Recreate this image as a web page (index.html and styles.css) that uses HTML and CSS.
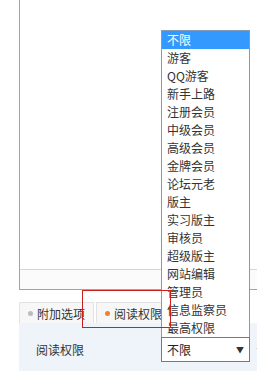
FILE: index.html
```html
<!DOCTYPE html>
<html lang="zh-CN">
<head>
    <meta charset="UTF-8">
    <title>阅读权限</title>
    <link rel="stylesheet" href="styles.css">
</head>
<body>
    <div class="page">
        <div class="editor">
            <div class="editor-foot"></div>
        </div>
        <div class="tabs">
            <div class="tab"><span class="dot"></span>附加选项</div>
            <div class="tab"><span class="dot dot-on"></span>阅读权限</div>
            <div class="tab"><span class="dot"></span>其他</div>
        </div>
        <div class="panel">
            <span class="label">阅读权限</span>
            <div class="select-wrap">
                <ul class="options">
                    <li class="selected">不限</li>
                    <li>游客</li>
                    <li>QQ游客</li>
                    <li>新手上路</li>
                    <li>注册会员</li>
                    <li>中级会员</li>
                    <li>高级会员</li>
                    <li>金牌会员</li>
                    <li>论坛元老</li>
                    <li>版主</li>
                    <li>实习版主</li>
                    <li>审核员</li>
                    <li>超级版主</li>
                    <li>网站编辑</li>
                    <li>管理员</li>
                    <li>信息监察员</li>
                    <li>最高权限</li>
                </ul>
                <div class="select">不限<span class="arrow">▼</span></div>
            </div>
            <span class="hint">请</span>
        </div>
        <div class="mark"></div>
    </div>
</body>
</html>
```
FILE: styles.css
```css
html, body {
    margin: 0;
    background: #fff;
}
body {
    width: 257px;
    height: 371px;
    overflow: hidden;
    font-family: "Noto Sans CJK SC", "Liberation Sans", sans-serif;
    font-size: 12px;
    color: #333;
}
.page {
    position: relative;
    padding-left: 19px;
}

/* 编辑器区域 */
.editor {
    box-sizing: border-box;
    width: 300px;
    height: 290px;
    border-left: 1px solid #a3a3a3;
    border-bottom: 1px solid #a3a3a3;
    display: flex;
    flex-direction: column;
    justify-content: flex-end;
}
.editor-foot {
    height: 19px;
    border-top: 1px solid #d6d6d6;
    background: #fbfbfb;
}

/* 选项卡 */
.tabs {
    display: flex;
    gap: 2px;
    margin-top: 12px;
    height: 21px;
    width: 300px;
}
.tab {
    display: flex;
    align-items: center;
    gap: 4px;
    padding: 0 8px 0 8px;
    border: 1px solid #e3e3e3;
    border-bottom: 0;
    background: #f7f7f7;
    white-space: nowrap;
}
.dot {
    width: 5px;
    height: 5px;
    border-radius: 50%;
    background: #bdbdbd;
}
.dot-on { background: #f08030; }

/* 设置面板 */
.panel {
    display: flex;
    align-items: center;
    width: 300px;
    height: 60px;
    box-sizing: border-box;
    padding: 14px 0 0 17px;
    align-items: flex-start;
    background: #eef4fa;
}
.label {
    width: 125px;
    line-height: 25px;
}
.select-wrap {
    position: relative;
    width: 89px;
}
.select {
    box-sizing: border-box;
    height: 25px;
    line-height: 23px;
    padding-left: 5px;
    border: 1px solid #4a80cc;
    background: #fff;
    color: #222;
    position: relative;
}
.arrow {
    position: absolute;
    right: 5px;
    top: 0;
    font-size: 8px;
    color: #333;
}
.hint {
    margin-left: 6px;
    line-height: 25px;
    color: #999;
}

/* 下拉列表 */
.options {
    position: absolute;
    left: 0;
    bottom: 100%;
    box-sizing: border-box;
    width: 89px;
    margin: 0;
    padding: 0;
    list-style: none;
    background: #fff;
    border: 1px solid #7f9db9;
    border-bottom: 0;
}
.options li {
    height: 18px;
    line-height: 18px;
    padding-left: 5px;
    color: #333;
}
.options li.selected {
    background: #3399ff;
    color: #fff;
}

/* 红色标注框 */
.mark {
    position: absolute;
    left: 82px;
    top: 290px;
    width: 87px;
    height: 36px;
    border: 1px solid #cc1f1f;
}
```
